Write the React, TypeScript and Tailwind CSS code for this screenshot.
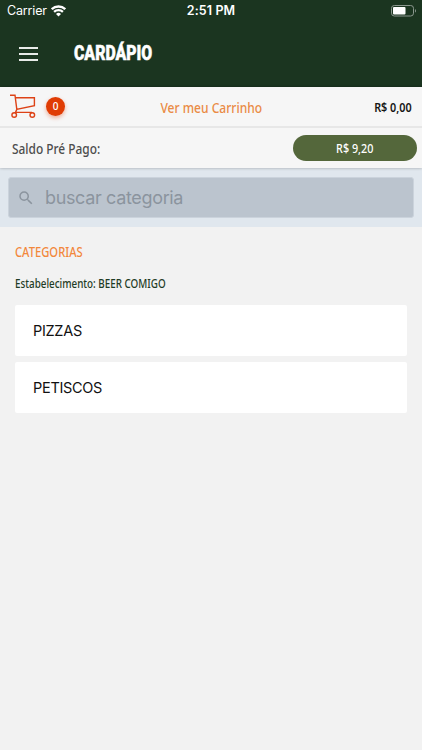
import { MdSearch } from "react-icons/md";

const categories = ["PIZZAS", "PETISCOS"];

const StatusBar = () => (
  <div className="relative flex h-[22px] items-center justify-between pl-[7px] pr-[5px] font-['Inter',sans-serif] text-white">
    <div className="flex items-center gap-[5px]">
      <span className="w-[39px] text-[12.5px] tracking-[-0.15px]">Carrier</span>
      <svg width="15" height="12" viewBox="0 0 15 12" fill="none" stroke="currentColor" strokeWidth="2.3">
        <path d="M.8 4.2a9.6 9.6 0 0 1 13.4 0M3.1 6.9a6.3 6.3 0 0 1 8.8 0" />
        <path d="M7.5 11.5 5 9a3.5 3.5 0 0 1 5 0Z" fill="currentColor" stroke="none" />
      </svg>
    </div>
    <span className="absolute left-0 w-full text-center text-[12.5px] font-semibold tracking-[0.1px]">
      2:51 PM
    </span>
    <svg width="26" height="12" viewBox="0 0 26 12">
      <rect x=".5" y=".5" width="22" height="10.5" rx="2.8" fill="none" stroke="#8b978e" />
      <rect x="2" y="2" width="12.5" height="7.5" rx="1" fill="#fff" />
      <path d="M24 4v3.6c1.3-.5 1.3-3.1 0-3.6" fill="#8b978e" />
    </svg>
  </div>
);

const CartIcon = () => (
  <svg width="26" height="26" viewBox="0 0 26 26" fill="none" stroke="#dd4216" strokeWidth="1.4">
    <path d="M0 1.2h5l1.8 14.2M5.4 3.8h19v8L6.8 15.4 5.5 18.4H22" />
    <circle cx="4.2" cy="21" r="2.3" />
    <circle cx="22.3" cy="21" r="2.3" />
  </svg>
);

export default function App() {
  return (
    <div className="flex h-[750px] w-full flex-col overflow-hidden bg-[#f2f2f2] font-['Noto_Sans',sans-serif] whitespace-nowrap">
      {/* header */}
      <header className="h-[87px] shrink-0 bg-[#1b3520]">
        <StatusBar />
        <div className="flex h-[64px] items-center pl-[19px]">
          <div className="flex w-[55px] flex-col gap-[4px]">
            <span className="h-[2px] w-[19px] bg-[#e8ebe8]" />
            <span className="h-[2px] w-[19px] bg-[#e8ebe8]" />
            <span className="h-[2px] w-[19px] bg-[#e8ebe8]" />
          </div>
          <h1 className="mt-[-3px] origin-left scale-x-[0.79] font-['Roboto',sans-serif] text-[20px] leading-none font-black text-white [-webkit-text-stroke:0.5px_#fff]">
            CARDÁPIO
          </h1>
        </div>
      </header>

      {/* cart and balance */}
      <section className="relative z-10 h-[81px] shrink-0 bg-[#f6f6f6] shadow-[0_0_3px_rgba(0,0,0,0.3)]">
        <div className="relative flex h-[41px] items-center border-b-2 border-[#e7e7e7] pr-[10px] pl-[10px]">
          <CartIcon />
          <span className="ml-[10px] flex size-[19px] items-center justify-center rounded-full bg-[#e03c04] text-[10px] font-medium text-white shadow-[0_2px_4px_rgba(224,60,4,0.4)]">
            0
          </span>
          <span className="absolute left-0 flex w-full justify-center pt-[2px]">
            <span className="scale-x-[0.83] text-[14.5px] font-medium text-[#ea8b45]">Ver meu Carrinho</span>
          </span>
          <span className="mt-[2px] ml-auto origin-right scale-x-[0.9] text-[12px] font-semibold text-[#151515]">
            R$ 0,00
          </span>
        </div>
        <div className="flex h-[40px] items-center pr-[5px] pl-[12px]">
          <span className="origin-left scale-x-[0.85] text-[14px] font-medium text-[#4d4d4d]">Saldo Pré Pago:</span>
          <div className="ml-auto flex h-[26px] w-[124px] items-center justify-center rounded-full bg-[#54673b]">
            <span className="mt-[2px] scale-x-[0.9] text-[12px] font-medium text-white">R$ 9,20</span>
          </div>
        </div>
      </section>

      {/* search */}
      <div className="h-[59px] shrink-0 bg-[#e0e7ee] px-[8px] pt-[9px]">
        <div className="flex h-[41px] items-center rounded-[3px] border border-[#cbd3dc] bg-[#bbc4ce] pl-[8px] text-[#8b949e]">
          <MdSearch size={18} />
          <span className="ml-[10px] font-['Inter',sans-serif] text-[18px] tracking-[-0.35px]">buscar categoria</span>
        </div>
      </div>

      {/* categories */}
      <main className="flex flex-col px-[15px] pt-[16px]">
        <h2 className="mt-[-1px] w-fit origin-left scale-x-[0.83] text-[13.5px] leading-[20px] font-medium text-[#f2883c]">
          CATEGORIAS
        </h2>
        <p className="mt-[13px] w-fit origin-left scale-x-[0.82] text-[12px] leading-[18px] font-medium text-[#1e3b25]">
          Estabelecimento: BEER COMIGO
        </p>
        <ul className="mt-[12px] flex flex-col gap-[6px]">
          {categories.map((name) => (
            <li
              key={name}
              className="flex h-[51px] items-center rounded-[2px] bg-white pl-[18px] font-['Inter',sans-serif] text-[14.5px] tracking-[-0.3px] text-[#111]"
            >
              {name}
            </li>
          ))}
        </ul>
      </main>
    </div>
  );
}
